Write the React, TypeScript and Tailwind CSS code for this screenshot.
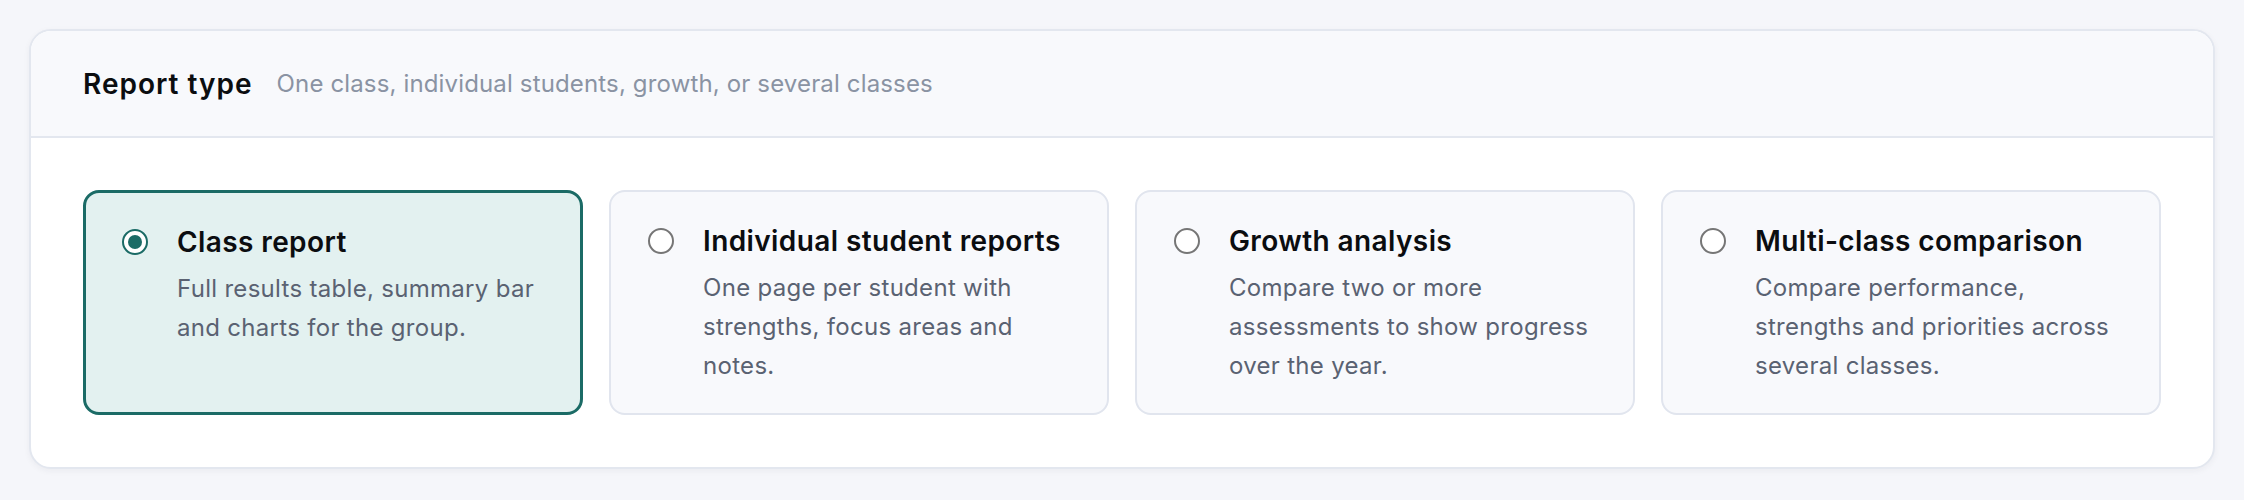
import { useState } from "react";

type Option = {
  id: string;
  title: string;
  description: string;
};

const OPTIONS: Option[] = [
  {
    id: "class",
    title: "Class report",
    description: "Full results table, summary bar and charts for the group.",
  },
  {
    id: "individual",
    title: "Individual student reports",
    description: "One page per student with strengths, focus areas and notes.",
  },
  {
    id: "growth",
    title: "Growth analysis",
    description: "Compare two or more assessments to show progress over the year.",
  },
  {
    id: "multi",
    title: "Multi-class comparison",
    description: "Compare performance, strengths and priorities across several classes.",
  },
];

function Radio({ checked }: { checked: boolean }) {
  return (
    <span
      className={`mt-[5px] flex h-[26px] w-[26px] shrink-0 items-center justify-center rounded-full border-[2.5px] bg-white ${
        checked ? "border-[#1b6b66]" : "border-[#767676]"
      }`}
    >
      {checked && <span className="h-[14px] w-[14px] rounded-full bg-[#1b6b66]" />}
    </span>
  );
}

export default function App() {
  const [selected, setSelected] = useState("class");

  return (
    <div
      className="min-h-[500px] bg-[#f5f6fa] p-[29px]"
      style={{ fontFamily: "Inter, 'Noto Sans', sans-serif" }}
    >
      <section className="overflow-hidden rounded-[22px] border-2 border-[#e3e7ef] bg-white shadow-[0_2px_6px_rgba(30,40,60,0.05)]">
        <header className="flex h-[107px] items-center gap-[24px] border-b-2 border-[#e3e7ef] bg-[#f8f9fc] px-[52px]">
          <h2 className="text-[28px] font-semibold tracking-[1px] text-[#0b0d10]">Report type</h2>
          <p className="text-[24px] tracking-[0.15px] text-[#8a93a3]">
            One class, individual students, growth, or several classes
          </p>
        </header>

        <div className="grid grid-cols-4 gap-[26px] p-[52px]">
          {OPTIONS.map((opt) => {
            const checked = selected === opt.id;
            return (
              <button
                key={opt.id}
                type="button"
                onClick={() => setSelected(opt.id)}
                className={`flex items-start gap-[29px] rounded-[16px] px-[37px] pt-[31px] pb-[28px] text-left ${
                  checked
                    ? "border-[3px] border-[#1b6b66] bg-[#e3f1f0] pl-[36px] pt-[30px]"
                    : "border-2 border-[#e1e5ee] bg-[#f8f9fc]"
                }`}
              >
                <Radio checked={checked} />
                <div className="flex flex-col gap-[9px]">
                  <span className="text-[28px] leading-[36px] font-semibold tracking-[0.4px] text-[#0b0d10]">
                    {opt.title}
                  </span>
                  <span className="text-[24px] leading-[39px] tracking-[0.3px] text-[#5a6272]">
                    {opt.description}
                  </span>
                </div>
              </button>
            );
          })}
        </div>
      </section>
    </div>
  );
}
